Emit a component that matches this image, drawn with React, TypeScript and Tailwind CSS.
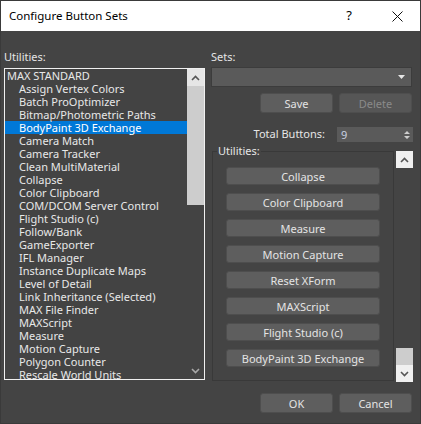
import React from "react";

const font = { fontFamily: '"Noto Sans", "Open Sans", sans-serif' };

const utilities = [
  "Assign Vertex Colors",
  "Batch ProOptimizer",
  "Bitmap/Photometric Paths",
  "BodyPaint 3D Exchange",
  "Camera Match",
  "Camera Tracker",
  "Clean MultiMaterial",
  "Collapse",
  "Color Clipboard",
  "COM/DCOM Server Control",
  "Flight Studio (c)",
  "Follow/Bank",
  "GameExporter",
  "IFL Manager",
  "Instance Duplicate Maps",
  "Level of Detail",
  "Link Inheritance (Selected)",
  "MAX File Finder",
  "MAXScript",
  "Measure",
  "Motion Capture",
  "Polygon Counter",
  "Rescale World Units",
];

const setButtons = [
  "Collapse",
  "Color Clipboard",
  "Measure",
  "Motion Capture",
  "Reset XForm",
  "MAXScript",
  "Flight Studio (c)",
  "BodyPaint 3D Exchange",
];

function Chevron({ up, color }: { up?: boolean; color: string }) {
  return (
    <svg width="9" height="6" viewBox="0 0 9 6">
      <polyline
        points={up ? "1,5 4.5,1.5 8,5" : "1,1 4.5,4.5 8,1"}
        fill="none"
        stroke={color}
        strokeWidth="1.6"
      />
    </svg>
  );
}

function DlgButton({
  label,
  disabled,
  className = "",
}: {
  label: string;
  disabled?: boolean;
  className?: string;
}) {
  return (
    <div
      className={
        "flex items-center justify-center rounded-[3px] border border-[#4e4e4e] text-[11px] leading-none " +
        (disabled ? "bg-[#565656] text-[#8a8a8a] " : "bg-[#5e5e5e] text-[#e4e4e4] ") +
        className
      }
    >
      {label}
    </div>
  );
}

export default function App() {
  return (
    <div
      className="w-[421px] h-[424px] bg-[#444444] border border-[#3a3a3a] flex flex-col overflow-hidden select-none"
      style={font}
    >
      {/* title bar */}
      <div className="h-[30px] bg-white flex items-center pl-[8px] shrink-0">
        <span className="text-[11.5px] text-black">Configure Button Sets</span>
        <span className="ml-auto text-[13px] text-black mr-[40px]">?</span>
        <svg width="11" height="11" viewBox="0 0 11 11" className="mr-[17px]">
          <path d="M0.5 0.5 L10.5 10.5 M10.5 0.5 L0.5 10.5" stroke="#111" strokeWidth="1" />
        </svg>
      </div>

      <div className="flex flex-1 pt-[19px]">
        {/* left column */}
        <div className="ml-[3px] w-[201px] flex flex-col">
          <div className="h-[13px] leading-[13px] text-[11px] text-[#e6e6e6]">Utilities:</div>
          <div className="mt-[5px] h-[312px] border border-[#f0f0f0] bg-[#434343] flex overflow-hidden">
            <div className="flex-1 overflow-hidden">
              <div className="h-[13px] leading-[13px] text-[11px] text-[#e8e8e8] pl-[2px]">MAX STANDARD</div>
              {utilities.map((u) => (
                <div
                  key={u}
                  className={
                    "h-[13px] leading-[13px] text-[11px] pl-[14px] whitespace-nowrap " +
                    (u === "BodyPaint 3D Exchange" ? "bg-[#0078d7] text-white" : "text-[#e8e8e8]")
                  }
                >
                  {u}
                </div>
              ))}
            </div>
            <div className="w-[17px] flex flex-col shrink-0">
              <div className="h-[17px] bg-[#e6e6e6] flex items-center justify-center">
                <Chevron up color="#555" />
              </div>
              <div className="h-[119px] bg-[#cdcdcd]" />
              <div className="flex-1" />
              <div className="h-[17px] flex items-center justify-center">
                <Chevron color="#a8a8a8" />
              </div>
            </div>
          </div>
        </div>

        {/* right column */}
        <div className="ml-[6px] w-[202px] flex flex-col">
          <div className="h-[13px] leading-[13px] text-[11px] text-[#e6e6e6]">Sets:</div>
          <div className="mt-[4px] h-[20px] w-[201px] bg-[#5a5a5a] border border-[#3c3c3c] flex items-center justify-end pr-[6px]">
            <svg width="7" height="4" viewBox="0 0 7 4">
              <path d="M0 0 H7 L3.5 4 Z" fill="#e6e6e6" />
            </svg>
          </div>
          <div className="mt-[6px] h-[20px] flex justify-end gap-[6px] pr-[1px]">
            <DlgButton label="Save" className="w-[73px]" />
            <DlgButton label="Delete" disabled className="w-[73px]" />
          </div>
          <div className="mt-[14px] h-[15px] flex justify-end items-center">
            <span className="text-[11px] text-[#e6e6e6] mr-[12px]">Total Buttons:</span>
            <div className="w-[76px] h-[15px] bg-[#5a5a5a] flex items-center pl-[4px] pr-[3px]">
              <span className="text-[11px] text-[#c8d0e0] leading-none">9</span>
              <svg width="6" height="10" viewBox="0 0 6 10" className="ml-auto">
                <path d="M0 4 L3 1 L6 4 Z M0 6 L3 9 L6 6 Z" fill="#cfcfcf" />
              </svg>
            </div>
          </div>
          <div className="mt-[9px] h-[231px] flex">
            <div className="relative ml-[1px] w-[182px] h-[230px] border border-[#393939] flex flex-col items-center pt-[15px] gap-[8px]">
              <span className="absolute left-[4px] -top-[8px] bg-[#444444] px-[1px] text-[11px] leading-[13px] text-[#e6e6e6]">
                Utilities:
              </span>
              {setButtons.map((b) => (
                <DlgButton key={b} label={b} className="w-[154px] h-[18px] shrink-0" />
              ))}
            </div>
            <div className="ml-[2px] w-[17px] flex flex-col">
              <div className="h-[17px] bg-[#f0f0f0] flex items-center justify-center">
                <Chevron up color="#555" />
              </div>
              <div className="flex-1" />
              <div className="h-[17px] bg-[#cdcdcd]" />
              <div className="h-[17px] bg-[#f0f0f0] flex items-center justify-center">
                <Chevron color="#555" />
              </div>
            </div>
          </div>
          <div className="mt-[11px] h-[20px] flex justify-end gap-[6px] pr-[1px]">
            <DlgButton label="OK" className="w-[73px]" />
            <DlgButton label="Cancel" className="w-[73px]" />
          </div>
        </div>
      </div>
    </div>
  );
}
